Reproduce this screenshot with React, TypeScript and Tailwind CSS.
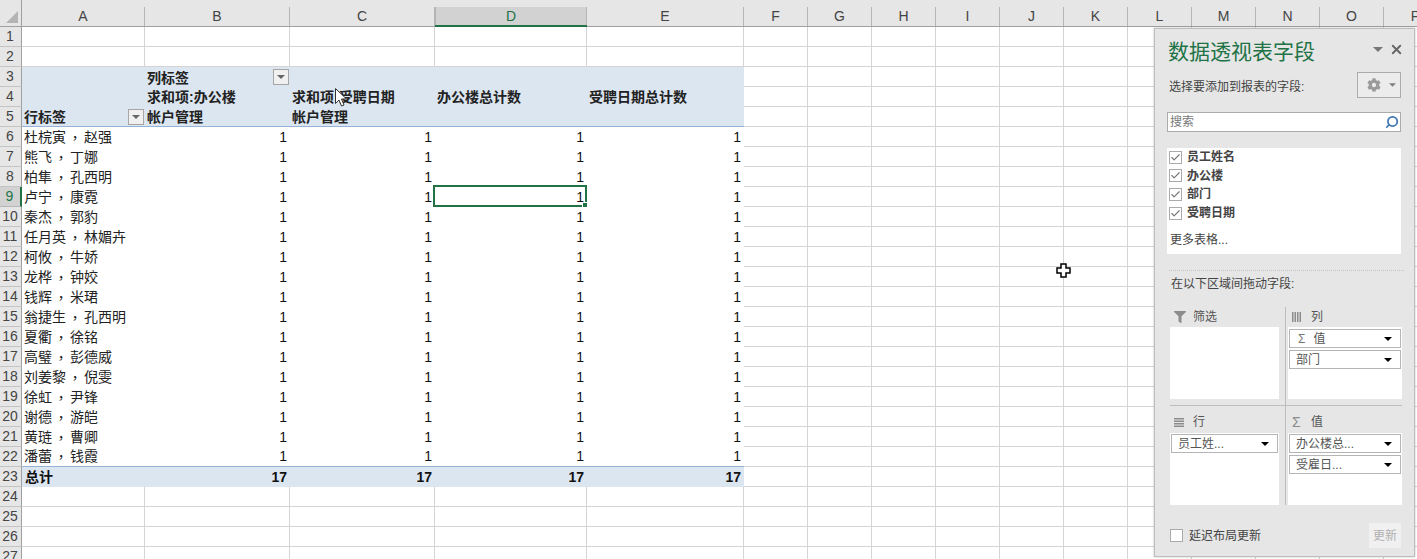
// Excel sheet with a pivot table and the field list pane docked over the right side.
import type { ReactNode } from "react";
import { Check, Search, X } from "lucide-react";
import { FaCog, FaFilter } from "react-icons/fa";

const COLUMNS = ["A", "B", "C", "D", "E", "F", "G", "H", "I", "J", "K", "L", "M", "N", "O", "P"];

const NAMES = [
  ["杜梡寅", "赵强"],
  ["熊飞", "丁娜"],
  ["柏隼", "孔西明"],
  ["卢宁", "康霓"],
  ["秦杰", "郭豹"],
  ["任月英", "林媚卉"],
  ["柯攸", "牛娇"],
  ["龙桦", "钟姣"],
  ["钱辉", "米珺"],
  ["翁捷生", "孔西明"],
  ["夏衢", "徐铭"],
  ["高璧", "彭德威"],
  ["刘姜黎", "倪雯"],
  ["徐虹", "尹锋"],
  ["谢德", "游皑"],
  ["黄琏", "曹卿"],
  ["潘蕾", "钱霞"],
];

const ROW_COUNT = 27;

function Caret({ className }: { className: string }) {
  return (
    <svg viewBox="0 0 8 4" className={className} fill="currentColor">
      <path d="M0 0h8L4 4z" />
    </svg>
  );
}

function FilterButton() {
  return (
    <span className="ml-auto mr-[1px] flex h-[16px] w-[16px] items-center justify-center border border-[#a6a6a6] bg-[#f0f0f0]">
      <Caret className="h-[4px] w-[8px] text-[#666666]" />
    </span>
  );
}

function ColumnHeader({ label }: { label: string }) {
  const selected = label === "D";
  return (
    <div className={selected ? "border-b-2 border-[#217346] bg-[#e6e6e6] pt-[7px]" : "border-b border-[#9f9f9f] bg-[#e6e6e6] pt-[7px]"}>
      <div
        className={
          selected
            ? "flex h-[18px] items-center justify-center border-x border-[#b5b5b5] bg-[#d2d2d2] text-[14px] text-[#217346]"
            : "flex h-[19px] items-center justify-center border-r border-[#b5b5b5] text-[14px] text-[#444444]"
        }
      >
        {label}
      </div>
    </div>
  );
}

function RowHeader({ row }: { row: number }) {
  const selected = row === 9;
  return (
    <div
      className={
        selected
          ? "flex items-center justify-center border-r-2 border-b border-[#217346] border-b-[#b5b5b5] bg-[#d2d2d2] pr-[1px] text-[14px] text-[#217346]"
          : "flex items-center justify-center border-r border-b border-r-[#9f9f9f] border-b-[#c4c4c4] bg-[#e6e6e6] pr-[1px] text-[14px] text-[#444444]"
      }
    >
      {row}
    </div>
  );
}

function headerText(row: number, col: number): ReactNode {
  if (row === 3 && col === 1) {
    return (
      <>
        <span className="pt-[2px]">列标签</span>
        <FilterButton />
      </>
    );
  }
  if (row === 4) {
    return ["", "求和项:办公楼", "求和项:受聘日期", "办公楼总计数", "受聘日期总计数"][col];
  }
  if (row === 5 && col === 0) {
    return (
      <>
        <span className="pt-[2px]">行标签</span>
        <FilterButton />
      </>
    );
  }
  if (row === 5 && (col === 1 || col === 2)) return <span className="pt-[2px]">帐户管理</span>;
  return null;
}

function PivotCell({ row, col }: { row: number; col: number }) {
  // banded header rows 3-5
  if (row >= 3 && row <= 5) {
    return (
      <div
        className={
          row === 5
            ? "flex items-center whitespace-nowrap border-b border-[#95b3d7] bg-[#dce6f1] pl-[2px] font-semibold text-[14px] text-[#222222]"
            : "flex items-center whitespace-nowrap bg-[#dce6f1] pl-[2px] font-semibold text-[14px] text-[#222222]"
        }
      >
        {headerText(row, col)}
      </div>
    );
  }
  // grand total row
  if (row === 23) {
    return col === 0 ? (
      <div className="flex items-center bg-[#dce6f1] pl-[3px] font-semibold text-[14px] text-[#111111]">总计</div>
    ) : (
      <div className="flex items-center justify-end bg-[#dce6f1] pr-[3px] font-bold text-[14px] text-[#111111]">17</div>
    );
  }
  const lastRow = row === 22;
  if (col === 0) {
    const [first, second] = NAMES[row - 6];
    return (
      <div
        className={
          lastRow
            ? "flex items-center whitespace-nowrap border-b border-[#95b3d7] bg-white pl-[2px] text-[14px] text-[#222222]"
            : "flex items-center whitespace-nowrap bg-white pl-[2px] text-[14px] text-[#222222]"
        }
      >
        {first}
        <span className="inline-block w-[18px] text-center font-['Noto_Sans_CJK_TC',sans-serif]">，</span>
        {second}
      </div>
    );
  }
  return (
    <div
      className={
        lastRow
          ? "relative flex items-center justify-end border-b border-[#95b3d7] bg-white pr-[3px] text-[14px] text-[#111111]"
          : "relative flex items-center justify-end bg-white pr-[3px] text-[14px] text-[#111111]"
      }
    >
      1
      {row === 9 && col === 3 && (
        <span className="absolute -left-[2px] -top-[2px] h-[22px] w-[154px] border-2 border-[#217346]">
          <span className="absolute -bottom-[3px] -right-[3px] h-[6px] w-[6px] border border-white bg-[#217346]" />
        </span>
      )}
    </div>
  );
}

function Sheet() {
  const rows = Array.from({ length: ROW_COUNT }, (_, i) => i + 1);
  return (
    <div className="grid grid-cols-[22px_123px_145px_145px_152px_157px_repeat(11,64px)] grid-rows-[27px] auto-rows-[20px]">
      <div className="flex items-end justify-end border-r border-b border-r-[#9f9f9f] border-b-[#9f9f9f] bg-[#e6e6e6] pb-[3px] pr-[3px]">
        <svg viewBox="0 0 12 12" className="h-[12px] w-[12px] text-[#b4b4b4]" fill="currentColor">
          <path d="M12 0v12H0z" />
        </svg>
      </div>
      {COLUMNS.map((c) => (
        <ColumnHeader key={c} label={c} />
      ))}
      {rows.map((row) => (
        <div key={row} className="contents">
          <RowHeader row={row} />
          {COLUMNS.map((c, col) =>
            col < 5 && row >= 3 && row <= 23 ? (
              <PivotCell key={c} row={row} col={col} />
            ) : (
              <div key={c} className="border-r border-b border-[#d4d4d4] bg-white" />
            ),
          )}
        </div>
      ))}
    </div>
  );
}

function FieldRow({ label }: { label: string }) {
  return (
    <div className="flex h-[18.6px] items-center pl-[2px]">
      <span className="flex h-[13px] w-[13px] items-center justify-center border border-[#ababab] bg-white">
        <Check className="h-[11px] w-[11px] text-[#777777]" strokeWidth={2.5} />
      </span>
      <span className="ml-[5px] text-[12px] font-semibold text-[#444444]">{label}</span>
    </div>
  );
}

function Chip({ label, sigma }: { label: string; sigma?: boolean }) {
  return (
    <div className="mx-[1px] mb-[2px] flex h-[19px] items-center border border-[#b5b5b5] bg-white pl-[6px] pr-[8px] text-[12px] text-[#555555]">
      {sigma && <span className="ml-[2px] mr-[8px] text-[#777777]">Σ</span>}
      <span className="whitespace-nowrap">{label}</span>
      <Caret className="ml-auto h-[4px] w-[8px] text-black" />
    </div>
  );
}

function Zone({ icon, label, children, tall }: { icon: ReactNode; label: string; children?: ReactNode; tall?: boolean }) {
  return (
    <div className="flex h-full flex-col">
      <div className={tall ? "flex h-[22px] items-center text-[12px] text-[#555555]" : "flex h-[20px] items-center text-[12px] text-[#555555]"}>
        <span className="flex w-[23px] justify-start pl-[4px]">{icon}</span>
        {label}
      </div>
      <div className={tall ? "h-[72px] bg-white pt-[1px]" : "h-[72px] bg-white pt-[2px]"}>{children}</div>
    </div>
  );
}

function FieldPane() {
  return (
    <aside className="absolute left-[1154px] top-[28px] flex h-[529px] w-[261px] flex-col border border-[#bdbdbd] bg-[#e6e6e6] pl-[12px] pr-[13px] shadow-[0_0_2px_rgba(0,0,0,0.25)]">
      <div className="flex h-[43px] items-start justify-between pt-[8px]">
        <h2 className="pl-[1px] text-[21px] leading-[30px] font-normal text-[#217346]">数据透视表字段</h2>
        <div className="-mr-[3px] mt-[5px] flex items-center gap-[6px]">
          <Caret className="h-[5px] w-[10px] text-[#777777]" />
          <X className="h-[15px] w-[15px] text-[#666666]" strokeWidth={3} />
        </div>
      </div>
      <div className="flex h-[26px] items-center justify-between">
        <span className="pl-[2px] pt-[4px] text-[12px] text-[#444444]">选择要添加到报表的字段:</span>
        <div className="flex h-[26px] w-[44px] items-center gap-[8px] border border-[#ababab] bg-[#ececec] pl-[9px]">
          <FaCog className="h-[14px] w-[14px] text-[#9a9a9a]" />
          <Caret className="h-[4px] w-[7px] text-[#808080]" />
        </div>
      </div>
      <div className="mt-[14px] flex h-[20px] items-center justify-between border border-[#ababab] bg-white pl-[2px] pr-[1px] text-[12px] text-[#777777]">
        搜索
        <Search className="h-[14px] w-[14px] -scale-x-100 text-[#3f78b5]" strokeWidth={3} />
      </div>
      <div className="mt-[16px] flex h-[106px] flex-col bg-white">
        <FieldRow label="员工姓名" />
        <FieldRow label="办公楼" />
        <FieldRow label="部门" />
        <FieldRow label="受聘日期" />
        <div className="mt-[9px] pl-[3px] text-[12px] text-[#444444]">更多表格...</div>
      </div>
      <div className="ml-[2px] mr-[-3px] mt-[16px] border-t border-dotted border-[#c4c4c4]" />
      <div className="mt-[5px] pl-[4px] text-[12px] leading-[16px] text-[#444444]">在以下区域间拖动字段:</div>
      <div className="ml-[3px] mt-[15px] grid grid-cols-[116px_116px] grid-rows-[99px_99px]">
        <div className="border-r border-b border-[#bdbdbd] pr-[6px]">
          <Zone icon={<FaFilter className="h-[12px] w-[12px] text-[#8c8c8c]" />} label="筛选" />
        </div>
        <div className="border-b border-[#bdbdbd] pl-[2px]">
          <Zone
            label="列"
            icon={
              <svg viewBox="0 0 9 10" className="h-[10px] w-[9px] text-[#8c8c8c]" fill="currentColor">
                <path d="M0 0h1.500v10H0zM2.500 0h1.500v10H2.500zM5 0h1.500v10H5zM7.500 0h1.500v10H7.500z" />
              </svg>
            }
          >
            <Chip label="值" sigma />
            <Chip label="部门" />
          </Zone>
        </div>
        <div className="border-r border-[#bdbdbd] pr-[6px] pt-[5px]">
          <Zone
            tall
            label="行"
            icon={
              <svg viewBox="0 0 10 9" className="h-[9px] w-[10px] text-[#8c8c8c]" fill="currentColor">
                <path d="M0 0h10v1.500H0zM0 2.500h10v1.500H0zM0 5h10v1.500H0zM0 7.500h10v1.500H0z" />
              </svg>
            }
          >
            <Chip label="员工姓..." />
          </Zone>
        </div>
        <div className="pl-[2px] pt-[5px]">
          <Zone tall label="值" icon={<span className="text-[14px] leading-none text-[#8c8c8c]">Σ</span>}>
            <Chip label="办公楼总..." />
            <Chip label="受雇日..." />
          </Zone>
        </div>
      </div>
      <div className="mt-[18px] flex h-[25px] items-center justify-between">
        <label className="flex items-center pl-[3px] text-[12px] text-[#444444]">
          <span className="mr-[6px] h-[13px] w-[13px] border border-[#ababab] bg-white" />
          延迟布局更新
        </label>
        <span className="flex h-[25px] w-[32px] items-center justify-center bg-[#f0f0f0] text-[12px] text-[#b0b0b0]">更新</span>
      </div>
    </aside>
  );
}

export default function App() {
  return (
    <div className="relative h-[559px] w-[1417px] overflow-hidden bg-white font-['Liberation_Sans','Noto_Sans_CJK_SC',sans-serif]">
      <Sheet />
      <FieldPane />
      {/* mouse pointer over C4 */}
      <svg viewBox="0 0 12 19" className="absolute left-[335px] top-[88px] h-[19px] w-[12px]">
        <path d="M0.500 0.500v15l3.500-3.500 2.500 6 2.500-1-2.500-6h5z" fill="white" stroke="#333333" strokeWidth="1" />
      </svg>
      {/* cell-select cross cursor */}
      <svg viewBox="0 0 15 15" className="absolute left-[1056px] top-[263px] h-[15px] w-[15px]">
        <path d="M5 1h5v4h4v5h-4v4H5v-4H1V5h4z" fill="white" stroke="black" strokeWidth="1.500" />
      </svg>
    </div>
  );
}
